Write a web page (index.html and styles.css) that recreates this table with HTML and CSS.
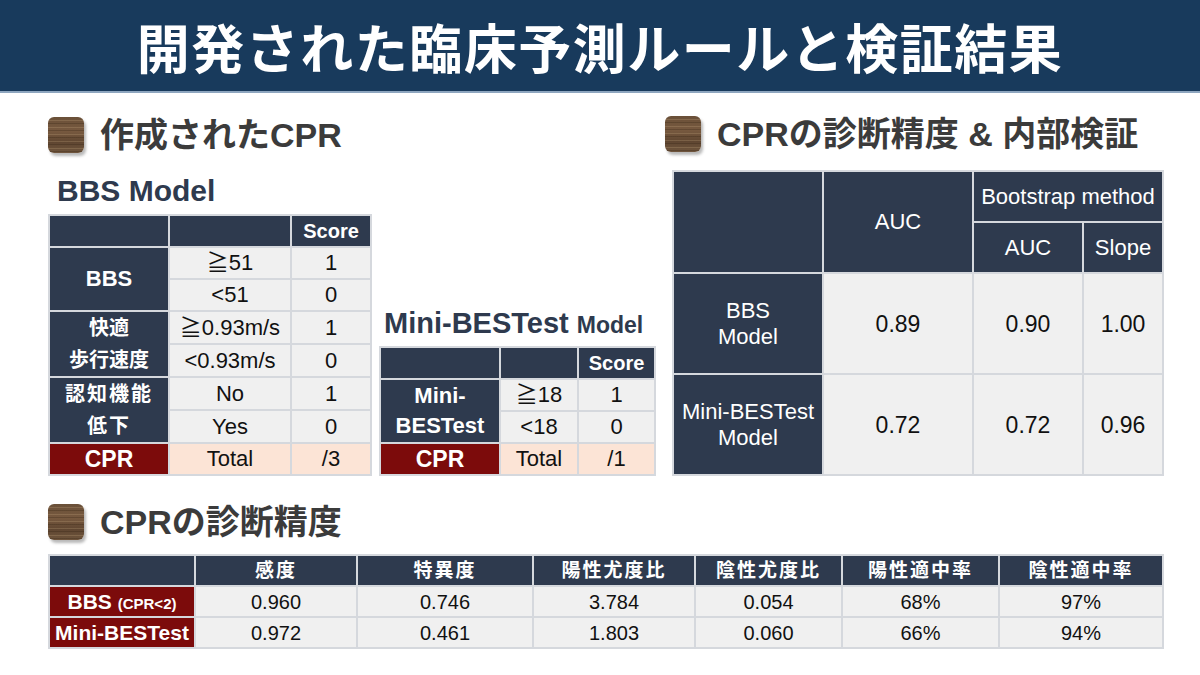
FILE: index.html
```html
<!DOCTYPE html>
<html lang="ja">
<head>
<meta charset="utf-8">
<title>開発された臨床予測ルールと検証結果</title>
<link rel="stylesheet" href="styles.css">
</head>
<body>
<header class="topbar">
  <h1 class="main-title">開発された臨床予測ルールと検証結果</h1>
</header>
<main class="content">
  <div class="top-row">
    <section class="left-col">
      <h2 class="sec-title"><span class="wood"></span>作成されたCPR</h2>
      <div class="models">
        <div class="model bbs">
          <h3 class="model-title">BBS Model</h3>
          <table class="score-table bbs-table">
            <colgroup><col class="c1"><col class="c2"><col class="c3"></colgroup>
            <tr><th></th><th></th><th class="bold">Score</th></tr>
            <tr><th rowspan="2" class="label">BBS</th><td>≧51</td><td>1</td></tr>
            <tr><td>&lt;51</td><td>0</td></tr>
            <tr><th rowspan="2" class="label jp">快適<br>歩行速度</th><td>≧0.93m/s</td><td>1</td></tr>
            <tr><td>&lt;0.93m/s</td><td>0</td></tr>
            <tr><th rowspan="2" class="label jp spaced">認知機能<br>低下</th><td>No</td><td>1</td></tr>
            <tr><td>Yes</td><td>0</td></tr>
            <tr class="cpr-row"><th class="red">CPR</th><td>Total</td><td>/3</td></tr>
          </table>
        </div>
        <div class="model mini">
          <h3 class="model-title">Mini-BESTest <span class="small">Model</span></h3>
          <table class="score-table mini-table">
            <colgroup><col class="m1"><col class="m2"><col class="m3"></colgroup>
            <tr><th></th><th></th><th class="bold">Score</th></tr>
            <tr><th rowspan="2" class="label">Mini-<br>BESTest</th><td>≧18</td><td>1</td></tr>
            <tr><td>&lt;18</td><td>0</td></tr>
            <tr class="cpr-row"><th class="red">CPR</th><td>Total</td><td>/1</td></tr>
          </table>
        </div>
      </div>
    </section>
    <section class="right-col">
      <h2 class="sec-title"><span class="wood"></span>CPRの診断精度 &amp; 内部検証</h2>
      <table class="auc-table">
        <colgroup><col class="a1"><col class="a2"><col class="a3"><col class="a4"></colgroup>
        <tr class="h1"><th rowspan="2"></th><th rowspan="2">AUC</th><th colspan="2">Bootstrap method</th></tr>
        <tr class="h2"><th>AUC</th><th>Slope</th></tr>
        <tr class="b"><th>BBS<br>Model</th><td>0.89</td><td>0.90</td><td>1.00</td></tr>
        <tr class="b"><th>Mini-BESTest<br>Model</th><td>0.72</td><td>0.72</td><td>0.96</td></tr>
      </table>
    </section>
  </div>
  <section class="bottom">
    <h2 class="sec-title"><span class="wood"></span>CPRの診断精度</h2>
    <table class="acc-table">
      <colgroup>
        <col class="d1"><col class="d2"><col class="d3"><col class="d4"><col class="d5"><col class="d6"><col class="d7">
      </colgroup>
      <tr class="hd"><th></th><th>感度</th><th>特異度</th><th>陽性尤度比</th><th>陰性尤度比</th><th>陽性適中率</th><th>陰性適中率</th></tr>
      <tr><th class="red">BBS <span class="sub">(CPR&lt;2)</span></th><td>0.960</td><td>0.746</td><td>3.784</td><td>0.054</td><td>68%</td><td>97%</td></tr>
      <tr><th class="red">Mini-BESTest</th><td>0.972</td><td>0.461</td><td>1.803</td><td>0.060</td><td>66%</td><td>94%</td></tr>
    </table>
  </section>
</main>
</body>
</html>
```
FILE: styles.css
```css
* { box-sizing: border-box; }
html, body {
  margin: 0;
  padding: 0;
  background: #ffffff;
}
body {
  width: 1200px;
  height: 675px;
  overflow: hidden;
  font-family: "Liberation Sans", "Noto Sans CJK JP", sans-serif;
  color: #111;
}
.topbar {
  height: 93px;
  background: #183a5c;
  border-bottom: 2px solid #8ea6bf;
  display: flex;
  align-items: center;
  justify-content: center;
}
.main-title {
  margin: 0;
  color: #fff;
  font-family: "Noto Sans CJK JP", sans-serif;
  font-weight: 700;
  font-size: 53px;
  letter-spacing: 1.5px;
  line-height: 1;
  padding-top: 2px;
}
.content {
  padding: 0 38px 0 48px;
}
.top-row {
  display: flex;
}
.left-col {
  width: 604px;
  padding-top: 23px;
}
.right-col {
  width: 497px;
  margin-left: 13px;
  padding-top: 22px;
}
.sec-title {
  margin: 0;
  height: 38px;
  display: flex;
  align-items: center;
  gap: 16px;
  font-size: 34px;
  font-weight: 700;
  color: #3b3b3b;
  line-height: 1;
  white-space: nowrap;
}
.wood {
  flex: none;
  width: 36px;
  height: 36px;
  border-radius: 6px;
  background:
    repeating-linear-gradient(180deg,
      rgba(255,255,255,0) 0px, rgba(255,255,255,0) 3px,
      rgba(200,170,130,0.25) 3px, rgba(200,170,130,0.25) 4px,
      rgba(0,0,0,0) 4px, rgba(0,0,0,0) 6px,
      rgba(40,25,10,0.25) 6px, rgba(40,25,10,0.25) 7px),
    linear-gradient(180deg, #6a5038 0%, #77593f 40%, #5f4631 70%, #6f553d 100%);
  box-shadow: 2px 3px 3px rgba(0,0,0,0.28);
}
.models {
  display: flex;
  align-items: flex-end;
  gap: 7px;
  margin-top: 21px;
}
.model-title {
  margin: 0;
  font-weight: 700;
  color: #2e3a4e;
  line-height: 32px;
  white-space: nowrap;
}
.bbs .model-title {
  font-size: 30px;
  padding-left: 9px;
  margin-bottom: 7px;
}
.mini .model-title {
  font-size: 29px;
  padding-left: 5px;
  margin-bottom: 5px;
}
.mini .model-title .small { font-size: 23px; }

table {
  border-collapse: collapse;
  table-layout: fixed;
}
th, td {
  padding: 0;
  text-align: center;
  vertical-align: middle;
  border: 2px solid #d5d8dd;
}
th {
  background: #2e3a4e;
  color: #fff;
}
td {
  background: #f0f0f0;
  color: #111;
}
.score-table th, .score-table td {
  height: 32px;
  font-size: 22px;
  font-weight: 400;
  line-height: 1;
}
.score-table th.bold { font-weight: 700; font-size: 20px; }
.score-table th.label {
  font-weight: 700;
  font-size: 22px;
  line-height: 32px;
}
.score-table th.label.jp { font-size: 20px; }
.score-table th.label.spaced { letter-spacing: 2px; }
.bbs-table { width: 322px; }
.bbs-table .c1 { width: 120px; }
.bbs-table .c2 { width: 122px; }
.bbs-table .c3 { width: 80px; }
.mini-table { width: 275px; }
.mini-table .m1 { width: 120px; }
.mini-table .m2 { width: 78px; }
.mini-table .m3 { width: 77px; }
.mini-table th.label { line-height: 30px; }
th.red {
  background: #7c0b0b;
  color: #fff;
  font-weight: 700;
}
.score-table .cpr-row th.red { font-size: 23px; }
.cpr-row td { background: #fce4d6; }

.auc-table {
  width: 490px;
  margin-top: 17px;
  margin-left: 7px;
}
.auc-table .a1 { width: 150px; }
.auc-table .a2 { width: 150px; }
.auc-table .a3 { width: 110px; }
.auc-table .a4 { width: 80px; }
.auc-table th, .auc-table td {
  font-size: 22px;
  font-weight: 400;
  line-height: 26px;
}
.auc-table td { font-size: 23px; }
.auc-table tr.h1 th { height: 51px; }
.auc-table tr.h1 th[colspan] { font-size: 22px; white-space: nowrap; }
.auc-table tr.h2 th { height: 51px; }
.auc-table tr.b th, .auc-table tr.b td { height: 101px; }
.auc-table tr.b th { font-size: 22px; }

.bottom {
  margin-top: 27px;
}
.acc-table {
  width: 1114px;
  margin-top: 13px;
}
.acc-table .d1 { width: 146px; }
.acc-table .d2 { width: 162px; }
.acc-table .d3 { width: 176px; }
.acc-table .d4 { width: 162px; }
.acc-table .d5 { width: 147px; }
.acc-table .d6 { width: 157px; }
.acc-table .d7 { width: 164px; }
.acc-table th, .acc-table td {
  height: 31px;
  font-size: 20px;
  line-height: 1;
}
.acc-table tr.hd th {
  font-weight: 700;
  font-size: 19px;
  letter-spacing: 2px;
}
.acc-table th.red { font-size: 21px; }
.acc-table .sub { font-size: 15px; }
```
